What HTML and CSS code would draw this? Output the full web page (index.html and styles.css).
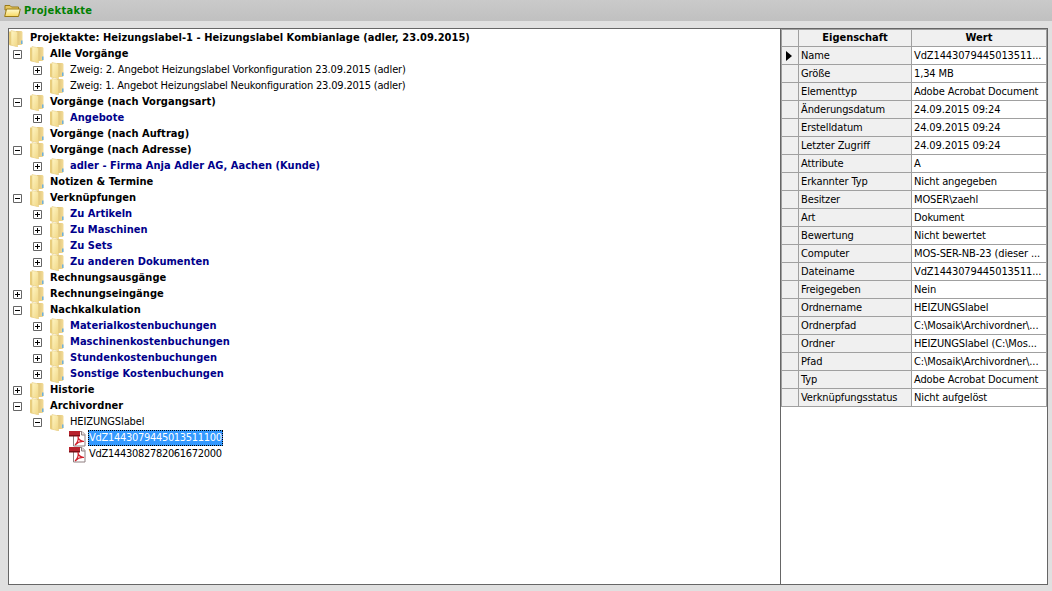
FILE: index.html
```html
<!DOCTYPE html>
<html lang="de">
<head>
<meta charset="utf-8">
<title>Projektakte</title>
<link rel="stylesheet" href="styles.css">
</head>
<body>
<svg class="defs" width="0" height="0">
  <defs>
    <linearGradient id="fg" x1="0" y1="0" x2="1" y2="1"><stop offset="0" stop-color="#fff6c4"/><stop offset="1" stop-color="#f0d684"/></linearGradient>
    <linearGradient id="tg" x1="0" y1="0" x2="1" y2="0"><stop offset="0" stop-color="#dcc074"/><stop offset="1" stop-color="#f3dc98"/></linearGradient>
    <linearGradient id="ti" x1="0" y1="0" x2="0" y2="1"><stop offset="0" stop-color="#fffbd0"/><stop offset="1" stop-color="#f8d860"/></linearGradient>
    <symbol id="folder" viewBox="0 0 15 17">
      <path d="M0 1.500h3l1 1.500v12.500H1l-1-1z" fill="#e9cd7c"/>
      <path d="M7 1h5.500l1 1v12l-1 1H7z" fill="url(#tg)"/>
      <path d="M2 .5l6.500 1.500v15L2 15z" fill="url(#fg)" stroke="#e6cd85" stroke-width=".6"/>
      <path d="M12 10.500h1.500v3.500H12z" fill="#6fb0dc"/>
    </symbol>
    <symbol id="plus" viewBox="0 0 9 9"><path d="M.5.5h8v8h-8z" fill="#fff" stroke="#666"/><path d="M2 4.500h5M4.500 2v5" stroke="#000"/></symbol>
    <symbol id="minus" viewBox="0 0 9 9"><path d="M.5.5h8v8h-8z" fill="#fff" stroke="#666"/><path d="M2 4.500h5" stroke="#000"/></symbol>
    <symbol id="pdf" viewBox="0 0 18 17">
      <path d="M4.500 1.500h8.500l3 3v11.500H4.500z" fill="#fff" stroke="#8f7f80"/>
      <path d="M12.500 1.500v3.500h3.500" fill="#e8e0e0" stroke="#8f7f80"/>
      <path d="M0 1h11v5H0z" fill="#b8222c"/>
      <path d="M0 5h11v1.500H0z" fill="#7a1016"/>
      <path d="M6 15c3-2.500 3.500-6 3-9 0 3 1.500 5 6 5.500-3.500-.5-6.500 1-9 3.500z" fill="none" stroke="#d01f2a" stroke-width="1.200"/>
    </symbol>
  </defs>
</svg>
<header class="titlebar">
  <svg class="title-icon" width="17" height="14" viewBox="0 0 17 14"><path d="M1 1.500h5l1.500 1.500h7v3H1z" fill="#e8c860" stroke="#9a7a18"/><path d="M.7 12.500 2.500 5h13.800l-1.800 7.500z" fill="url(#ti)" stroke="#9a7a18"/></svg>
  <span class="title-text">Projektakte</span>
</header>
<main class="panel">
  <section class="tree">
    <div class="row root"><svg class="folder"><use href="#folder"/></svg><b>Projektakte: Heizungslabel-1 - Heizungslabel Kombianlage (adler, 23.09.2015)</b></div>
    <div class="row l1"><svg class="exp"><use href="#minus"/></svg><svg class="folder"><use href="#folder"/></svg><b>Alle Vorgänge</b></div>
    <div class="row l2"><svg class="exp"><use href="#plus"/></svg><svg class="folder"><use href="#folder"/></svg><span>Zweig: 2. Angebot Heizungslabel Vorkonfiguration 23.09.2015 (adler)</span></div>
    <div class="row l2"><svg class="exp"><use href="#plus"/></svg><svg class="folder"><use href="#folder"/></svg><span class="tight">Zweig: 1. Angebot Heizungslabel Neukonfiguration 23.09.2015 (adler)</span></div>
    <div class="row l1"><svg class="exp"><use href="#minus"/></svg><svg class="folder"><use href="#folder"/></svg><b>Vorgänge (nach Vorgangsart)</b></div>
    <div class="row l2"><svg class="exp"><use href="#plus"/></svg><svg class="folder"><use href="#folder"/></svg><b class="blue">Angebote</b></div>
    <div class="row l1 noexp"><svg class="folder"><use href="#folder"/></svg><b>Vorgänge (nach Auftrag)</b></div>
    <div class="row l1"><svg class="exp"><use href="#minus"/></svg><svg class="folder"><use href="#folder"/></svg><b>Vorgänge (nach Adresse)</b></div>
    <div class="row l2"><svg class="exp"><use href="#plus"/></svg><svg class="folder"><use href="#folder"/></svg><b class="blue">adler - Firma Anja Adler AG, Aachen (Kunde)</b></div>
    <div class="row l1 noexp"><svg class="folder"><use href="#folder"/></svg><b>Notizen &amp; Termine</b></div>
    <div class="row l1"><svg class="exp"><use href="#minus"/></svg><svg class="folder"><use href="#folder"/></svg><b>Verknüpfungen</b></div>
    <div class="row l2"><svg class="exp"><use href="#plus"/></svg><svg class="folder"><use href="#folder"/></svg><b class="blue">Zu Artikeln</b></div>
    <div class="row l2"><svg class="exp"><use href="#plus"/></svg><svg class="folder"><use href="#folder"/></svg><b class="blue">Zu Maschinen</b></div>
    <div class="row l2"><svg class="exp"><use href="#plus"/></svg><svg class="folder"><use href="#folder"/></svg><b class="blue">Zu Sets</b></div>
    <div class="row l2"><svg class="exp"><use href="#plus"/></svg><svg class="folder"><use href="#folder"/></svg><b class="blue">Zu anderen Dokumenten</b></div>
    <div class="row l1 noexp"><svg class="folder"><use href="#folder"/></svg><b>Rechnungsausgänge</b></div>
    <div class="row l1"><svg class="exp"><use href="#plus"/></svg><svg class="folder"><use href="#folder"/></svg><b>Rechnungseingänge</b></div>
    <div class="row l1"><svg class="exp"><use href="#minus"/></svg><svg class="folder"><use href="#folder"/></svg><b>Nachkalkulation</b></div>
    <div class="row l2"><svg class="exp"><use href="#plus"/></svg><svg class="folder"><use href="#folder"/></svg><b class="blue">Materialkostenbuchungen</b></div>
    <div class="row l2"><svg class="exp"><use href="#plus"/></svg><svg class="folder"><use href="#folder"/></svg><b class="blue">Maschinenkostenbuchungen</b></div>
    <div class="row l2"><svg class="exp"><use href="#plus"/></svg><svg class="folder"><use href="#folder"/></svg><b class="blue">Stundenkostenbuchungen</b></div>
    <div class="row l2"><svg class="exp"><use href="#plus"/></svg><svg class="folder"><use href="#folder"/></svg><b class="blue">Sonstige Kostenbuchungen</b></div>
    <div class="row l1"><svg class="exp"><use href="#plus"/></svg><svg class="folder"><use href="#folder"/></svg><b>Historie</b></div>
    <div class="row l1"><svg class="exp"><use href="#minus"/></svg><svg class="folder"><use href="#folder"/></svg><b>Archivordner</b></div>
    <div class="row l2"><svg class="exp"><use href="#minus"/></svg><svg class="folder"><use href="#folder"/></svg><span>HEIZUNGSlabel</span></div>
    <div class="row l3"><svg class="pdf"><use href="#pdf"/></svg><span class="selected num">VdZ1443079445013511100</span></div>
    <div class="row l3"><svg class="pdf"><use href="#pdf"/></svg><span class="file num">VdZ1443082782061672000</span></div>
  </section>
  <section class="props">
    <table class="grid">
      <thead><tr><th class="rh"></th><th class="c1">Eigenschaft</th><th class="c2">Wert</th></tr></thead>
      <tbody>
        <tr><td class="rh"><span class="arrow"></span></td><td class="k">Name</td><td class="v">VdZ1443079445013511...</td></tr>
        <tr><td class="rh"></td><td class="k">Größe</td><td class="v">1,34 MB</td></tr>
        <tr><td class="rh"></td><td class="k">Elementtyp</td><td class="v">Adobe Acrobat Document</td></tr>
        <tr><td class="rh"></td><td class="k">Änderungsdatum</td><td class="v">24.09.2015 09:24</td></tr>
        <tr><td class="rh"></td><td class="k">Erstelldatum</td><td class="v">24.09.2015 09:24</td></tr>
        <tr><td class="rh"></td><td class="k">Letzter Zugriff</td><td class="v">24.09.2015 09:24</td></tr>
        <tr><td class="rh"></td><td class="k">Attribute</td><td class="v">A</td></tr>
        <tr><td class="rh"></td><td class="k">Erkannter Typ</td><td class="v">Nicht angegeben</td></tr>
        <tr><td class="rh"></td><td class="k">Besitzer</td><td class="v">MOSER\zaehl</td></tr>
        <tr><td class="rh"></td><td class="k">Art</td><td class="v">Dokument</td></tr>
        <tr><td class="rh"></td><td class="k">Bewertung</td><td class="v">Nicht bewertet</td></tr>
        <tr><td class="rh"></td><td class="k">Computer</td><td class="v">MOS-SER-NB-23 (dieser ...</td></tr>
        <tr><td class="rh"></td><td class="k">Dateiname</td><td class="v">VdZ1443079445013511...</td></tr>
        <tr><td class="rh"></td><td class="k">Freigegeben</td><td class="v">Nein</td></tr>
        <tr><td class="rh"></td><td class="k">Ordnername</td><td class="v">HEIZUNGSlabel</td></tr>
        <tr><td class="rh"></td><td class="k">Ordnerpfad</td><td class="v">C:\Mosaik\Archivordner\...</td></tr>
        <tr><td class="rh"></td><td class="k">Ordner</td><td class="v">HEIZUNGSlabel (C:\Mos...</td></tr>
        <tr><td class="rh"></td><td class="k">Pfad</td><td class="v">C:\Mosaik\Archivordner\...</td></tr>
        <tr><td class="rh"></td><td class="k">Typ</td><td class="v">Adobe Acrobat Document</td></tr>
        <tr><td class="rh"></td><td class="k">Verknüpfungsstatus</td><td class="v">Nicht aufgelöst</td></tr>
      </tbody>
    </table>
  </section>
</main>
</body>
</html>
```
FILE: styles.css
```css
* { box-sizing: border-box; }
html, body { margin: 0; height: 100%; overflow: hidden; }
body {
  width: 1052px; height: 591px;
  background: #e0e0e0;
  font: 11px/16px "DejaVu Sans", sans-serif;
  font-stretch: condensed;
  letter-spacing: -0.12px;
  color: #000;
  display: flex; flex-direction: column;
}
b { letter-spacing: 0.04px; }
.defs { position: absolute; }
.titlebar {
  height: 21px; flex: none;
  background: linear-gradient(#cacaca, #c0c0c0);
  display: flex; align-items: center;
  padding-left: 4px; gap: 3px;
}
.title-text { color: #008000; font-weight: bold; letter-spacing: 0.3px; }
.title-icon { flex: none; }
.panel {
  margin: 7px 4px 6px 8px;
  height: 557px;
  background: #fff;
  border: 1px solid #666;
  display: flex;
}
.tree { width: 772px; flex: none; border-right: 1px solid #666; padding-top: 1px; }
.row { height: 16px; display: flex; align-items: center; white-space: nowrap; }
.exp { width: 9px; height: 9px; flex: none; margin-right: 8px; }
.folder { width: 15px; height: 17px; flex: none; margin-right: 5px; }
.pdf { width: 18px; height: 17px; flex: none; margin-right: 1px; }
.root { padding-left: 1px; }
.root .folder { margin-left: -1px; margin-right: 6px; }
.l1 { padding-left: 4px; }
.l1.noexp { padding-left: 21px; }
.l2 { padding-left: 24px; }
.l3 { padding-left: 60px; }
.blue { color: #00008b; }
.tight { letter-spacing: -0.18px; }
.num { letter-spacing: -0.3px; }
.selected { background: #3399ff; color: #fff; outline: 1px dotted #000; outline-offset: -1px; padding: 0 1px; }
.file { padding: 0 1px; }
.props { flex: 1; min-width: 0; }
.grid { border-collapse: collapse; table-layout: fixed; width: 266px; }
.grid th, .grid td { height: 18px; padding: 0 0 0 2px; border: 1px solid #a0a0a0; white-space: nowrap; overflow: hidden; font-weight: normal; line-height: 16px; }
.grid th { height: 17px; padding: 0; background: #f0f0f0; font-weight: bold; text-align: center; letter-spacing: 0; }
.rh { width: 17px; background: #f0f0f0; }
.c1 { width: 113px; }
.k { background: #f0f0f0; }
.arrow { display: block; width: 0; height: 0; margin-left: 2px; border-left: 6px solid #000; border-top: 5px solid transparent; border-bottom: 5px solid transparent; }
```
